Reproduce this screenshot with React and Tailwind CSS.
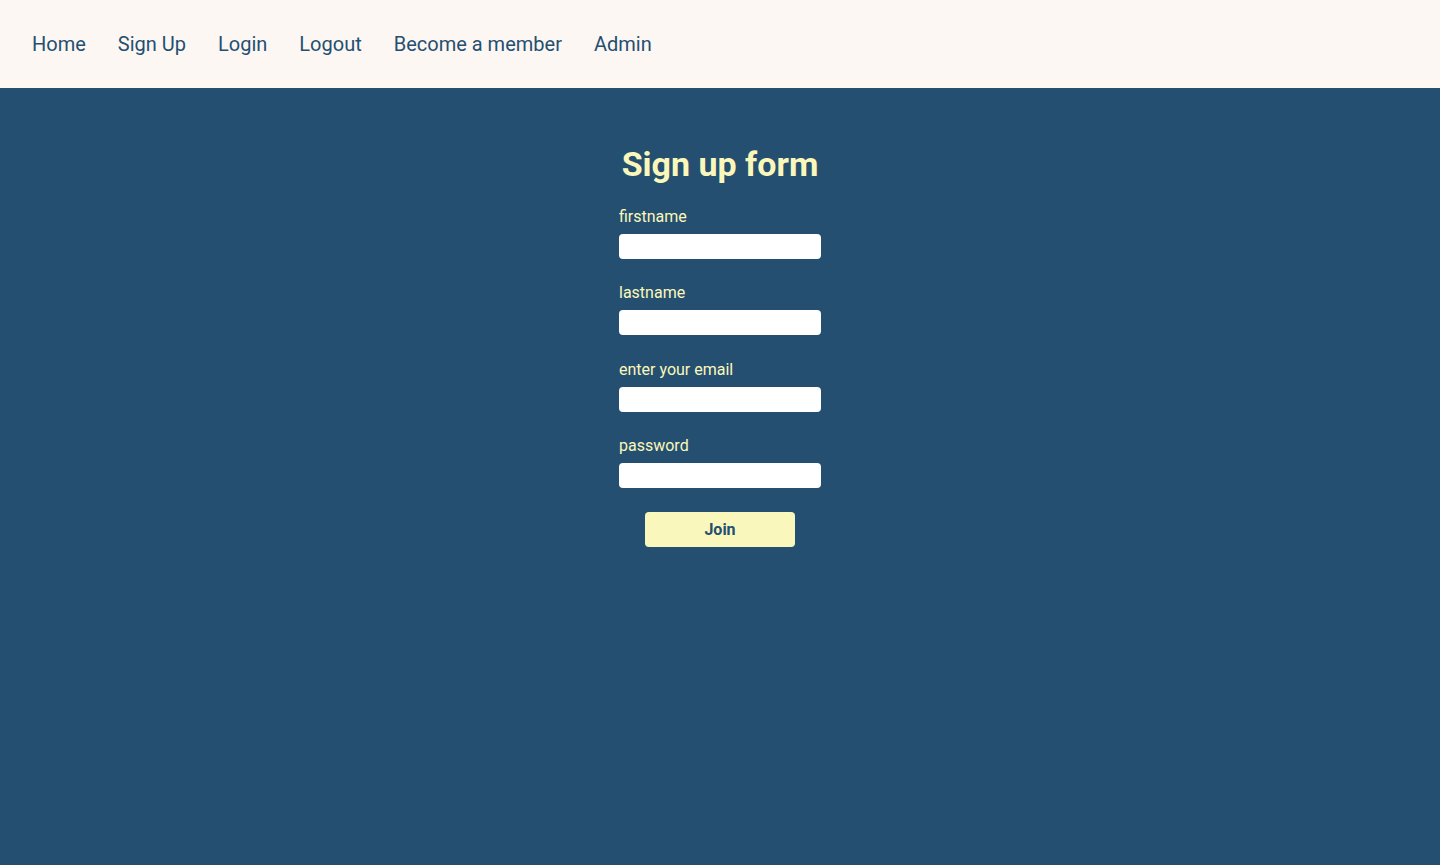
import React from "react";

export default function App() {
  const links = ["Home", "Sign Up", "Login", "Logout", "Become a member", "Admin"];
  const fields = ["firstname", "lastname", "enter your email", "password"];
  return (
    <div className="min-h-[865px] flex flex-col bg-[#244f70]" style={{ fontFamily: "Roboto, 'Liberation Sans', sans-serif" }}>
      <nav className="h-[88px] bg-[#fdf7f4] flex items-center px-4">
        {links.map((l) => (
          <a key={l} className="px-4 text-[20px] leading-[24px] text-[#244f70]">{l}</a>
        ))}
      </nav>
      <main className="flex-1 flex flex-col items-center pt-[56px]">
        <h1 className="text-[34px] leading-[40px] font-bold text-[#fbf7bb]">Sign up form</h1>
        <form className="mt-[20px] w-[202px] flex flex-col">
          {fields.map((f) => (
            <div key={f} className="flex flex-col mb-[21.25px]">
              <label className="pt-[1px] text-[16px] leading-[24px] text-[#fbf7bb]">{f}</label>
              <input className="mt-[5px] h-[25px] rounded-[4px] bg-white outline-none" />
            </div>
          ))}
          <button type="button" className="self-center mt-[3px] w-[150px] h-[35px] rounded-[4px] bg-[#faf7bd] text-[#244f70] font-bold text-[16px]">Join</button>
        </form>
      </main>
    </div>
  );
}
